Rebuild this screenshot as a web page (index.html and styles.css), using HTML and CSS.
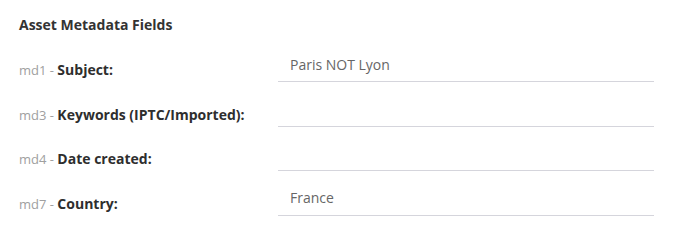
FILE: index.html
```html
<!DOCTYPE html>
<html>
<head>
<meta charset="utf-8">
<link rel="stylesheet" href="styles.css">
</head>
<body>
<div class="panel">
  <div class="title">Asset Metadata Fields</div>
  <div class="fields">
    <div class="row">
      <div class="label"><span class="code">md1 - </span><span class="name">Subject:</span></div>
      <div class="field"><span class="value">Paris NOT Lyon</span></div>
    </div>
    <div class="row">
      <div class="label"><span class="code">md3 - </span><span class="name">Keywords (IPTC/Imported):</span></div>
      <div class="field"><span class="value"></span></div>
    </div>
    <div class="row">
      <div class="label"><span class="code">md4 - </span><span class="name">Date created:</span></div>
      <div class="field"><span class="value"></span></div>
    </div>
    <div class="row">
      <div class="label"><span class="code">md7 - </span><span class="name">Country:</span></div>
      <div class="field"><span class="value">France</span></div>
    </div>
  </div>
</div>
</body>
</html>
```
FILE: styles.css
```css
html, body {
  margin: 0;
  padding: 0;
  background: #ffffff;
}
.panel {
  padding: 14px 26px 0 19px;
  font-family: "Open Sans", "Noto Sans", sans-serif;
}
.title {
  font-size: 14px;
  font-weight: 700;
  line-height: 22px;
  color: #333333;
}
.fields {
  margin-top: 1.5px;
}
.row {
  display: grid;
  grid-template-columns: 259px 376px;
  align-items: end;
  height: 44.5px;
}
.label {
  line-height: 20px;
  padding-bottom: 2px;
}
.code {
  font-size: 13px;
  color: #a0a0a0;
}
.name {
  font-size: 14px;
  font-weight: 700;
  color: #2e2e2e;
}
.field {
  height: 34px;
  box-sizing: border-box;
  border-bottom: 1px solid #d5d5dc;
  padding: 0 12px;
  display: flex;
  align-items: center;
}
.value {
  font-size: 14px;
  color: #666666;
  line-height: 20px;
}
```
